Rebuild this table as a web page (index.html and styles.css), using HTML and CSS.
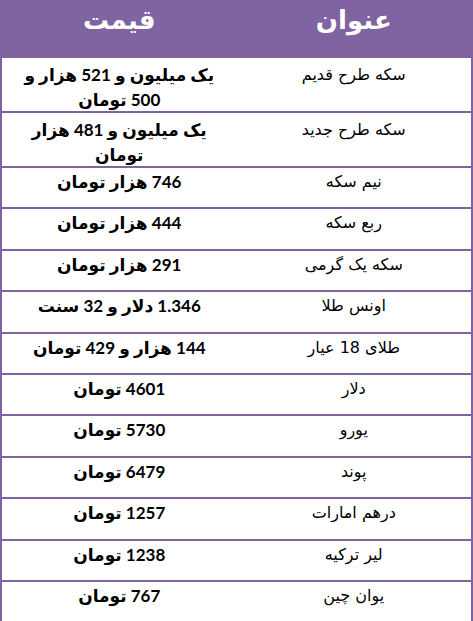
FILE: index.html
```html
<!DOCTYPE html>
<html lang="fa" dir="rtl">
<head>
<meta charset="utf-8">
<title>قیمت سکه و ارز</title>
<link rel="stylesheet" href="styles.css">
</head>
<body>
<div class="table">
  <div class="row head">
    <div class="cell">عنوان</div>
    <div class="cell">قیمت</div>
  </div>
  <div class="row tall">
    <div class="cell name">سکه طرح قدیم</div>
    <div class="cell price">یک میلیون و 521 هزار و<br>500 تومان</div>
  </div>
  <div class="row tall">
    <div class="cell name">سکه طرح جدید</div>
    <div class="cell price">یک میلیون و 481 هزار<br>تومان</div>
  </div>
  <div class="row">
    <div class="cell name">نیم سکه</div>
    <div class="cell price">746 هزار تومان</div>
  </div>
  <div class="row">
    <div class="cell name">ربع سکه</div>
    <div class="cell price">444 هزار تومان</div>
  </div>
  <div class="row">
    <div class="cell name">سکه یک گرمی</div>
    <div class="cell price">291 هزار تومان</div>
  </div>
  <div class="row">
    <div class="cell name">اونس طلا</div>
    <div class="cell price">1.346 دلار و 32 سنت</div>
  </div>
  <div class="row">
    <div class="cell name">طلای 18 عیار</div>
    <div class="cell price">144 هزار و 429 تومان</div>
  </div>
  <div class="row">
    <div class="cell name">دلار</div>
    <div class="cell price">4601 تومان</div>
  </div>
  <div class="row">
    <div class="cell name">یورو</div>
    <div class="cell price">5730 تومان</div>
  </div>
  <div class="row">
    <div class="cell name">پوند</div>
    <div class="cell price">6479 تومان</div>
  </div>
  <div class="row">
    <div class="cell name">درهم امارات</div>
    <div class="cell price">1257 تومان</div>
  </div>
  <div class="row">
    <div class="cell name">لیر ترکیه</div>
    <div class="cell price">1238 تومان</div>
  </div>
  <div class="row">
    <div class="cell name">یوان چین</div>
    <div class="cell price">767 تومان</div>
  </div>
</div>
</body>
</html>
```

FILE: styles.css
```css
html, body {
  margin: 0;
  padding: 0;
  background: #ffffff;
}

body {
  font-family: "DejaVu Sans", sans-serif;
  color: #000000;
}

.table {
  width: 473px;
  box-sizing: border-box;
  border-left: 2px solid #8064a2;
  border-right: 2px solid #8064a2;
}

.row {
  display: grid;
  grid-template-columns: 1fr 1fr;
  box-sizing: border-box;
  height: 41.4px;
  border-bottom: 2px solid #8064a2;
}

.row.tall {
  height: 55px;
}

.row.tall .cell {
  padding-top: 4px;
}

.row.head {
  height: 58px;
  background: #8064a2;
  border-bottom: none;
  color: #ffffff;
  font-weight: bold;
  font-size: 26px;
}

.row.head .cell {
  padding-top: 6px;
  line-height: 28px;
}

.cell {
  text-align: center;
  padding-top: 1px;
  line-height: 25px;
}

.name {
  font-size: 16px;
}

.price {
  font-family: "Lato", "DejaVu Sans", sans-serif;
  font-weight: bold;
  font-size: 17px;
}
```
